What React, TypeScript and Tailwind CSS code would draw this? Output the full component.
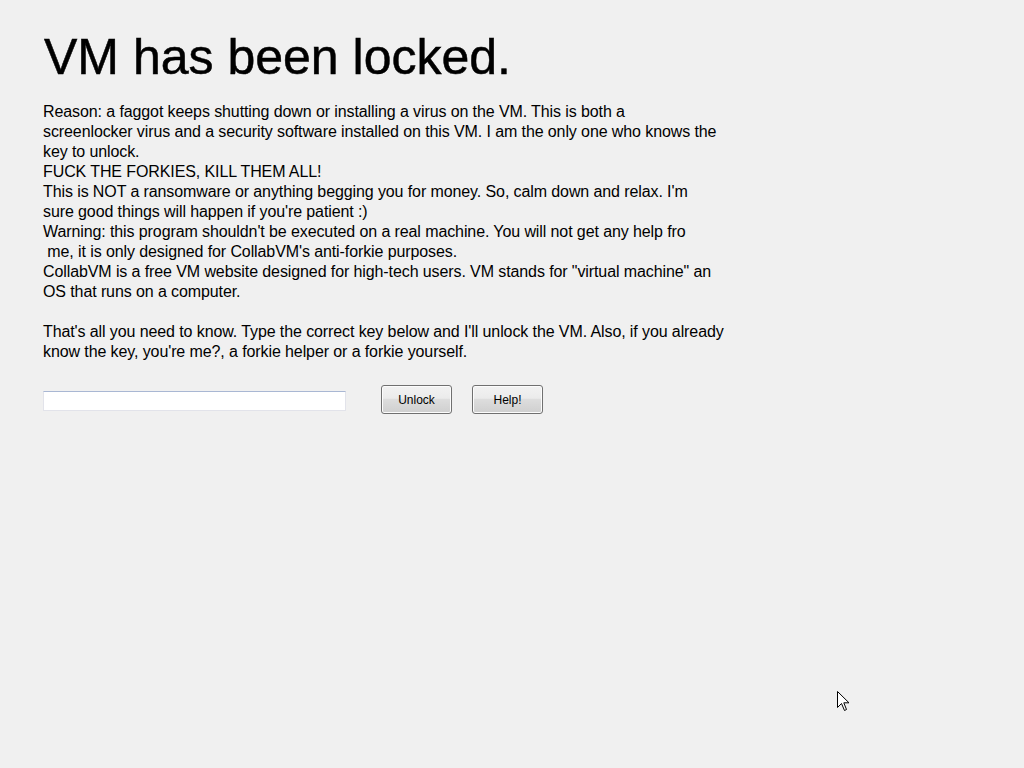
import React from "react";

const lines = [
  "Reason: a faggot keeps shutting down or installing a virus on the VM. This is both a",
  "screenlocker virus and a security software installed on this VM. I am the only one who knows the",
  "key to unlock.",
  "FUCK THE FORKIES, KILL THEM ALL!",
  "This is NOT a ransomware or anything begging you for money. So, calm down and relax. I'm",
  "sure good things will happen if you're patient :)",
  "Warning: this program shouldn't be executed on a real machine. You will not get any help fro",
  " me, it is only designed for CollabVM's anti-forkie purposes.",
  "CollabVM is a free VM website designed for high-tech users. VM stands for \"virtual machine\" an",
  "OS that runs on a computer.",
  "",
  "That's all you need to know. Type the correct key below and I'll unlock the VM. Also, if you already",
  "know the key, you're me?, a forkie helper or a forkie yourself.",
];

function Btn({ label }: { label: string }) {
  return (
    <button className="w-[71px] h-[29px] rounded-[3px] border border-[#707070] bg-[linear-gradient(#f2f2f2,#ebebeb_45%,#dddddd_50%,#cfcfcf)] text-[12px] text-black leading-none shadow-[inset_0_0_0_1px_#fcfcfc]">
      {label}
    </button>
  );
}

export default function App() {
  return (
    <div
      className="relative w-[1024px] h-[768px] overflow-hidden bg-[#f0f0f0] text-black pl-[43px] pt-[32px]"
      style={{ fontFamily: '"Liberation Sans", Arial, sans-serif' }}
    >
      <div className="text-[50px] leading-[50px] ml-[1px] [-webkit-text-stroke:0.5px_black]">
        VM has been locked.
      </div>
      <div className="mt-[20px] text-[16px] leading-[20px] tracking-[-0.1px]">
        {lines.map((l, i) => (
          <div key={i} className="whitespace-pre h-[20px]">
            {l}
          </div>
        ))}
      </div>
      <div className="mt-[23px] flex items-start">
        <input
          className="mt-[6px] w-[303px] h-[20px] bg-white border border-[#e2e3ea] border-t-[#a9b7d3] outline-none"
          type="text"
        />
        <div className="ml-[35px] flex gap-[20px]">
          <Btn label="Unlock" />
          <Btn label="Help!" />
        </div>
      </div>
      <svg
        className="absolute left-[837px] top-[691px]"
        width="14"
        height="21"
        viewBox="0 0 14 21"
      >
        <path
          d="M0.5 0.5 L0.5 16.5 L4.5 12.5 L7.5 19.5 L9.5 18.5 L6.8 11.8 L12 11.8 Z"
          fill="white"
          stroke="black"
          strokeWidth="1"
          strokeLinejoin="miter"
        />
      </svg>
    </div>
  );
}
